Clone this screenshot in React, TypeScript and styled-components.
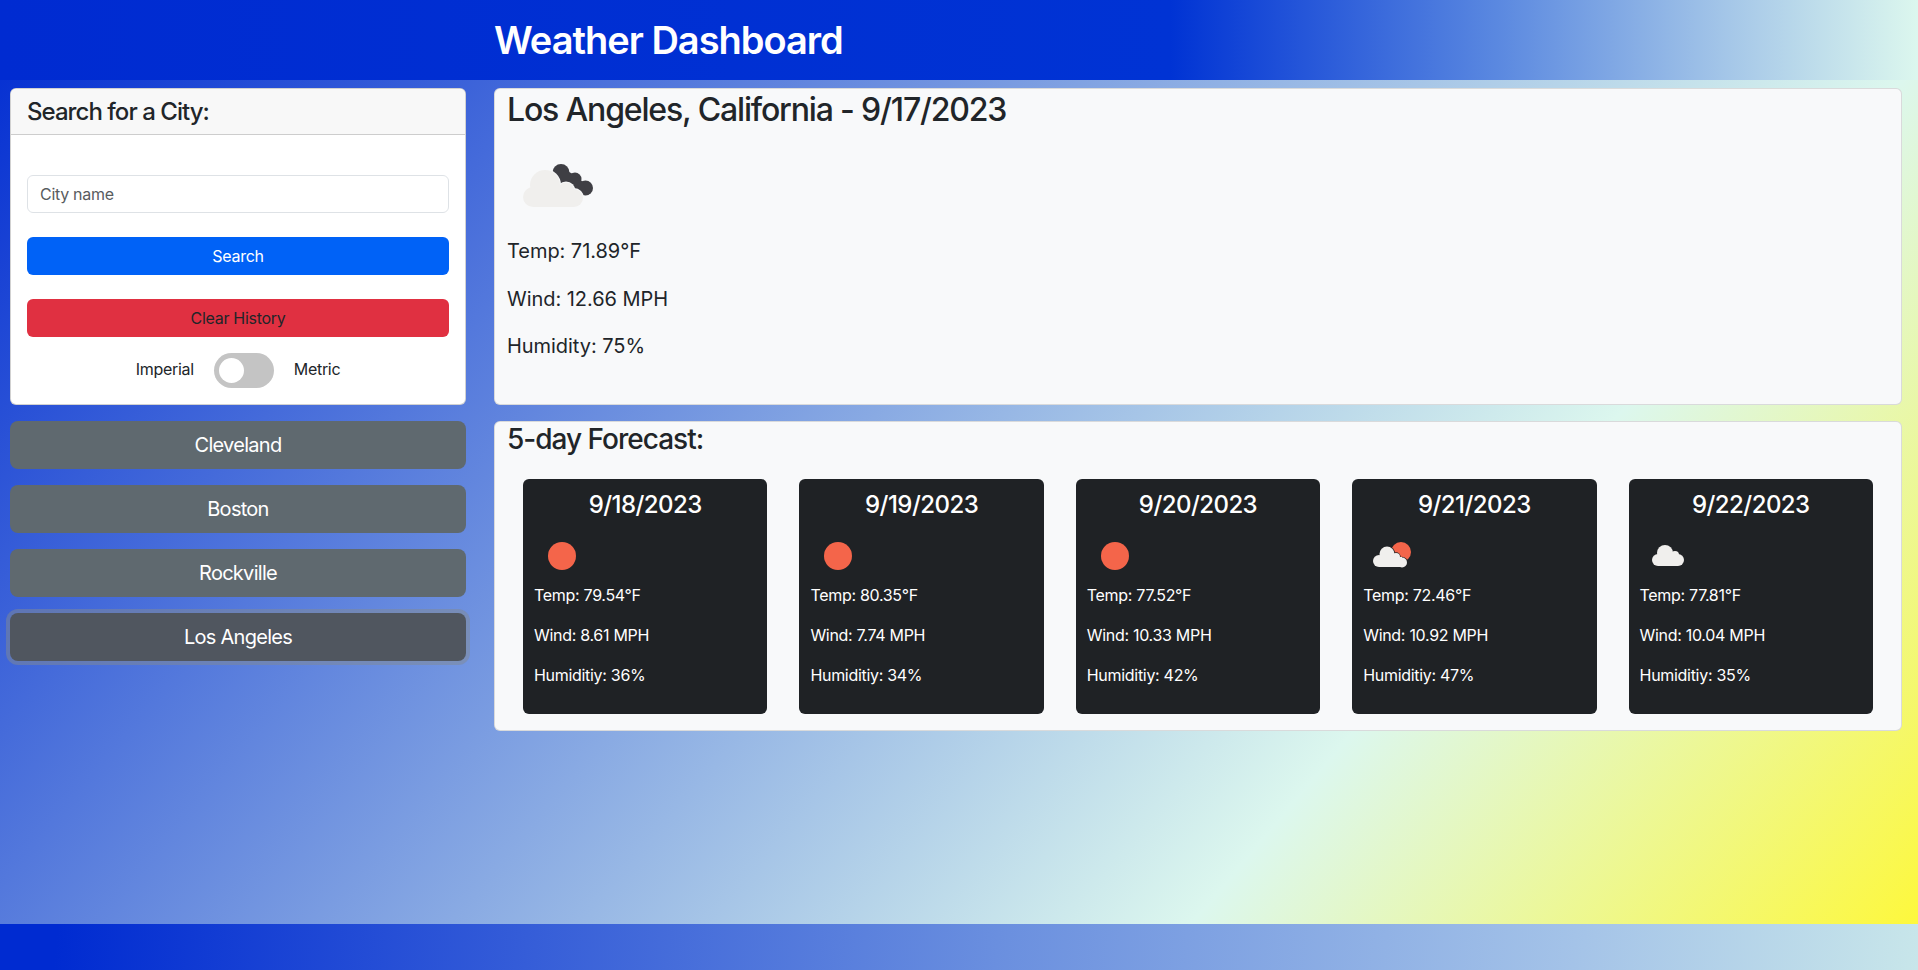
import React from "react";
import styled, { createGlobalStyle } from "styled-components";

const Global = createGlobalStyle`
  html, body { margin: 0; padding: 0; height: 100%; }
  body {
    font-family: Inter, "Liberation Sans", sans-serif;
    color: #212529;
    font-size: 16px;
    line-height: 1.5;
    letter-spacing: -0.3px;
    background: linear-gradient(130deg, #002bd1 0%, #dcf7ee 72%, #fff833 100%);
  }
  * { box-sizing: border-box; }
`;

const Page = styled.div`
  min-height: 970px;
  height: 970px;
  display: flex;
  flex-direction: column;
  overflow: hidden;
`;

const Header = styled.header`
  height: 80px;
  flex: none;
  padding: 2px 0 0 494px;
  display: flex;
  align-items: center;
  background: linear-gradient(90deg, #002bd1 0%, #0033d4 61%, #5a88e0 78%, #a4c6e8 90%, #dcf7ee 100%);
`;

const Title = styled.h1`
  margin: 0;
  color: #fff;
  font-size: 38px;
  font-weight: 600;
  letter-spacing: -1px;
  line-height: 1.2;
`;

const Main = styled.main`
  flex: 1;
  display: grid;
  grid-template-columns: 456px 1408px;
  column-gap: 28px;
  padding: 8px 0 0 10px;
  align-content: start;
`;

const Sidebar = styled.aside`
  display: flex;
  flex-direction: column;
  gap: 16px;
`;

const SearchCard = styled.section`
  height: 317px;
  background: #fff;
  border: 1px solid rgba(0, 0, 0, 0.18);
  border-radius: 6px;
  overflow: hidden;
`;

const SearchHeader = styled.h2`
  margin: 0;
  height: 46px;
  padding: 9px 16px 7px;
  font-size: 24px;
  font-weight: 500;
  letter-spacing: -0.95px;
  line-height: 1.2;
  background: #f8f8f8;
  border-bottom: 1px solid #cdcdcd;
`;

const SearchBody = styled.div`
  padding: 40px 16px 16px;
  display: flex;
  flex-direction: column;
`;

const CityInput = styled.input`
  height: 38px;
  width: 100%;
  padding: 6px 12px;
  font: inherit;
  letter-spacing: -0.3px;
  border: 1px solid #dee2e6;
  border-radius: 6px;
  background: #fff;
  &::placeholder { color: #595c5f; opacity: 1; }
`;

const ActionButton = styled.button<{ $tone: string; $ink: string }>`
  height: 38px;
  margin-top: 24px;
  width: 100%;
  font: inherit;
  letter-spacing: -0.3px;
  border: 0;
  border-radius: 6px;
  background: ${(p) => p.$tone};
  color: ${(p) => p.$ink};
`;

const UnitRow = styled.div`
  margin-top: 16px;
  height: 35px;
  display: flex;
  align-items: center;
  justify-content: center;
  gap: 20px;
`;

const UnitLabel = styled.span`
  margin-top: -4px;
`;

const Toggle = styled.span`
  width: 60px;
  height: 35px;
  border-radius: 34px;
  background: #c4c4c4;
  position: relative;
  &::before {
    content: "";
    position: absolute;
    left: 5px;
    top: 5px;
    width: 25px;
    height: 25px;
    border-radius: 50%;
    background: #fff;
  }
`;

const CityButton = styled.button<{ $active?: boolean }>`
  height: 48px;
  width: 100%;
  font: inherit;
  font-size: 20px;
  letter-spacing: -0.72px;
  border: 0;
  border-radius: 8px;
  color: #fff;
  background: ${(p) => (p.$active ? "#50565f" : "#5f696f")};
  box-shadow: ${(p) => (p.$active ? "0 0 0 4px rgba(130, 138, 145, 0.5)" : "none")};
`;

const Content = styled.div`
  display: flex;
  flex-direction: column;
  gap: 16px;
`;

const Panel = styled.section`
  background: #f8f9fa;
  border: 1px solid rgba(0, 0, 0, 0.12);
  border-radius: 6px;
  padding: 0 12px;
`;

const CurrentPanel = styled(Panel)`
  height: 317px;
`;

const CityTitle = styled.h2`
  margin: 2px 0 7px;
  font-size: 32px;
  font-weight: 500;
  letter-spacing: -1.16px;
  line-height: 1.2;
`;

const Stat = styled.p`
  margin: 0 0 17.5px;
  font-size: 20px;
  letter-spacing: -0.05px;
  line-height: 30px;
`;

const ForecastPanel = styled(Panel)`
  height: 310px;
`;

const ForecastTitle = styled.h3`
  margin: 1px 0 22px;
  font-size: 28px;
  font-weight: 500;
  letter-spacing: -1px;
  line-height: 1.2;
`;

const ForecastGrid = styled.div`
  display: grid;
  grid-template-columns: repeat(5, 244.4px);
  column-gap: 32px;
  padding-left: 16px;
`;

const DayCard = styled.article`
  height: 235px;
  padding: 12px 11px 10px;
  background: #1f2225;
  border-radius: 6px;
  color: #fff;
`;

const DayDate = styled.h4`
  margin: 0 0 8px;
  text-align: center;
  font-size: 24px;
  font-weight: 500;
  letter-spacing: -0.55px;
  line-height: 1.2;
`;

const DayStat = styled.p`
  margin: 0 0 16px;
  font-size: 16px;
  line-height: 24px;
`;

const IconSvg = styled.svg`
  display: block;
`;

const Footer = styled.footer`
  margin-top: auto;
  height: 46px;
  flex: none;
  background: linear-gradient(95deg, #002bd1 3%, #6a8fdf 52%, #a4c3e8 82%, #c8e6ea 100%);
`;

const SUN = "#f4654a";
const LIGHT = "#f0efed";
const DARK = "#3f3f44";

const NightClouds = () => (
  <IconSvg width="100" height="100" viewBox="0 0 100 100">
    <g fill={DARK}>
      <circle cx="54" cy="36.5" r="8.5" />
      <circle cx="68" cy="43" r="6.5" />
      <circle cx="78.5" cy="52" r="7.5" />
      <path d="M50 30 L66 38 L76 46 L80 58 L60 56 L48 44 Z" />
    </g>
    <g fill="#f8f9fa">
      <circle cx="38" cy="49" r="16" />
      <circle cx="59" cy="55" r="9.5" />
      <circle cx="67" cy="62" r="10" />
    </g>
    <g fill={LIGHT}>
      <circle cx="38" cy="49" r="15" />
      <circle cx="59" cy="55" r="8.5" />
      <circle cx="26" cy="61" r="10" />
      <circle cx="67" cy="62" r="9" />
      <rect x="26" y="55" width="41" height="16" />
    </g>
  </IconSvg>
);

const Sun = () => (
  <IconSvg width="56" height="56" viewBox="0 0 56 56">
    <circle cx="28" cy="29" r="14" fill={SUN} />
  </IconSvg>
);

const SunCloud = () => (
  <IconSvg width="56" height="56" viewBox="0 0 56 56">
    <circle cx="38" cy="25" r="10" fill={SUN} />
    <g fill="#1f2225">
      <circle cx="24" cy="27" r="8.2" />
      <circle cx="33" cy="30" r="4.7" />
      <circle cx="39" cy="35.5" r="5.7" />
    </g>
    <g fill={LIGHT}>
      <circle cx="24" cy="27" r="7.5" />
      <circle cx="16" cy="34" r="6" />
      <circle cx="33" cy="30" r="4" />
      <circle cx="39" cy="35.5" r="5" />
      <rect x="16" y="30" width="23" height="10" />
    </g>
  </IconSvg>
);

const Cloud = () => (
  <IconSvg width="56" height="56" viewBox="0 0 56 56">
    <g fill={LIGHT}>
      <circle cx="25" cy="26" r="8" />
      <circle cx="18" cy="33" r="6" />
      <circle cx="35" cy="28" r="4" />
      <circle cx="38" cy="33" r="6" />
      <rect x="18" y="28" width="20" height="11" />
    </g>
  </IconSvg>
);

const days = [
  { date: "9/18/2023", icon: <Sun />, temp: "79.54", wind: "8.61", hum: "36" },
  { date: "9/19/2023", icon: <Sun />, temp: "80.35", wind: "7.74", hum: "34" },
  { date: "9/20/2023", icon: <Sun />, temp: "77.52", wind: "10.33", hum: "42" },
  { date: "9/21/2023", icon: <SunCloud />, temp: "72.46", wind: "10.92", hum: "47" },
  { date: "9/22/2023", icon: <Cloud />, temp: "77.81", wind: "10.04", hum: "35" },
];

export default function App() {
  return (
    <Page>
      <Global />
      <Header>
        <Title>Weather Dashboard</Title>
      </Header>
      <Main>
        <Sidebar>
          <SearchCard>
            <SearchHeader>Search for a City:</SearchHeader>
            <SearchBody>
              <CityInput placeholder="City name" />
              <ActionButton $tone="#0062f7" $ink="#fff">Search</ActionButton>
              <ActionButton $tone="#e03041" $ink="#212529">Clear History</ActionButton>
              <UnitRow>
                <UnitLabel>Imperial</UnitLabel>
                <Toggle />
                <UnitLabel>Metric</UnitLabel>
              </UnitRow>
            </SearchBody>
          </SearchCard>
          <CityButton>Cleveland</CityButton>
          <CityButton>Boston</CityButton>
          <CityButton>Rockville</CityButton>
          <CityButton $active>Los Angeles</CityButton>
        </Sidebar>
        <Content>
          <CurrentPanel>
            <CityTitle>Los Angeles, California - 9/17/2023</CityTitle>
            <NightClouds />
            <Stat>Temp: 71.89°F</Stat>
            <Stat>Wind: 12.66 MPH</Stat>
            <Stat>Humidity: 75%</Stat>
          </CurrentPanel>
          <ForecastPanel>
            <ForecastTitle>5-day Forecast:</ForecastTitle>
            <ForecastGrid>
              {days.map((d) => (
                <DayCard key={d.date}>
                  <DayDate>{d.date}</DayDate>
                  {d.icon}
                  <DayStat>Temp: {d.temp}°F</DayStat>
                  <DayStat>Wind: {d.wind} MPH</DayStat>
                  <DayStat>Humiditiy: {d.hum}%</DayStat>
                </DayCard>
              ))}
            </ForecastGrid>
          </ForecastPanel>
        </Content>
      </Main>
      <Footer />
    </Page>
  );
}
